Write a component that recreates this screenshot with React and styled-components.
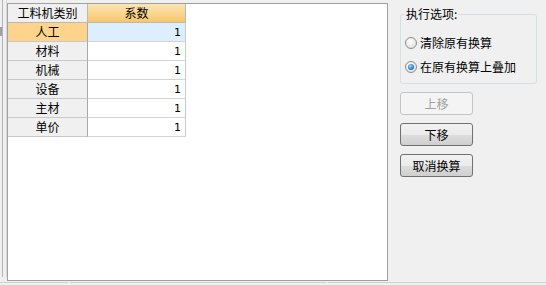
import React from "react";
import styled, { createGlobalStyle } from "styled-components";

const Global = createGlobalStyle`
	html, body {
		margin: 0;
		padding: 0;
		background: #f0f0f0;
	}
	body {
		font-family: "Noto Sans CJK SC", "Liberation Sans", sans-serif;
		font-size: 12px;
		color: #000;
	}
`;

const Page = styled.div`
	width: 546px;
	height: 285px;
	display: grid;
	grid-template-rows: 282px 3px;
	overflow: hidden;
	background: #f0f0f0;
`;

const Top = styled.div`
	display: flex;
`;

const Splitter = styled.div`
	width: 7px;
	height: 277px;
	box-sizing: border-box;
	border-right: 1px solid #d8d8d8;
	position: relative;
	&::before {
		content: "";
		position: absolute;
		left: 2px;
		top: 0;
		bottom: 0;
		width: 1px;
		background: #b4b4b4;
	}
	&::after {
		content: "";
		position: absolute;
		left: 0;
		top: 27px;
		width: 2px;
		height: 9px;
		background: #a0a0a0;
	}
`;

const GridPanel = styled.div`
	margin-top: 3px;
	width: 381px;
	height: 278px;
	box-sizing: border-box;
	border: 1px solid #a0a0a0;
	background: #fff;
`;

const Table = styled.div`
	display: grid;
	grid-template-columns: 80px 98px;
	grid-auto-rows: 19px;
	width: 178px;
`;

const HeadCell = styled.div`
	display: flex;
	align-items: center;
	justify-content: center;
	box-sizing: border-box;
	border-right: 1px solid #b8b8b8;
	border-bottom: 1px solid #b8b8b8;
	background: ${(p) =>
		p.$accent ? "linear-gradient(180deg, #fce6b4 0%, #f6c66c 100%)" : "#f0f0f0"};
	line-height: 1;
`;

const RowHead = styled.div`
	display: flex;
	align-items: center;
	justify-content: center;
	box-sizing: border-box;
	border-right: 1px solid #a8a8a8;
	border-bottom: 1px solid #c8c8c8;
	background: ${(p) => (p.$active ? "#fed48c" : "#f0f0f0")};
	line-height: 1;
`;

const Cell = styled.div`
	display: flex;
	align-items: center;
	justify-content: flex-end;
	padding-right: 4px;
	box-sizing: border-box;
	border-right: 1px solid #c8c8c8;
	border-bottom: 1px solid #d4d4d4;
	background: ${(p) => (p.$active ? "#ddeeff" : "#fff")};
	font-family: "DejaVu Sans", sans-serif;
	font-size: 11px;
	line-height: 1;
`;

const Side = styled.div`
	flex: 1;
	padding: 7px 0 0 12px;
	display: flex;
	flex-direction: column;
	align-items: flex-start;
`;

const Group = styled.fieldset`
	margin: 0;
	width: 137px;
	height: 77px;
	box-sizing: border-box;
	border: 1px solid #d5dfe5;
	border-radius: 3px;
	padding: 13px 0 0 4px;
	display: flex;
	flex-direction: column;
	gap: 6px;
`;

const Legend = styled.legend`
	padding: 0 1px;
	margin-left: 0;
	line-height: 14px;
`;

const RadioRow = styled.label`
	display: flex;
	align-items: center;
	gap: 3px;
	height: 18px;
	line-height: 1;
`;

const Dot = styled.span`
	width: 12px;
	height: 12px;
	box-sizing: border-box;
	border-radius: 50%;
	border: 1px solid #8c8c8c;
	background: radial-gradient(circle at 40% 35%, #ffffff 0%, #e4e4e4 70%, #d0d0d0 100%);
	display: flex;
	align-items: center;
	justify-content: center;
	&::after {
		content: "";
		display: ${(p) => (p.$checked ? "block" : "none")};
		width: 6px;
		height: 6px;
		border-radius: 50%;
		background: radial-gradient(circle at 40% 35%, #9adcff 0%, #2374c8 65%, #0e4f9a 100%);
	}
`;

const Buttons = styled.div`
	margin-top: 8px;
	display: flex;
	flex-direction: column;
	gap: 8px;
`;

const Button = styled.button`
	width: 73px;
	height: 23px;
	box-sizing: border-box;
	border-radius: 3px;
	border: 1px solid ${(p) => (p.disabled ? "#c4c4c4" : "#707070")};
	background: ${(p) =>
		p.disabled
			? "#f4f4f4"
			: "linear-gradient(180deg, #f2f2f2 0%, #ebebeb 50%, #dddddd 51%, #cfcfcf 100%)"};
	color: ${(p) => (p.disabled ? "#a0a0a0" : "#000")};
	font-family: inherit;
	font-size: 12px;
	line-height: 1;
	padding: 0;
`;

const Status = styled.div`
	display: grid;
	grid-template-columns: 68px 256px 1fr;
	gap: 2px;
	align-items: end;
`;

const StatusPart = styled.div`
	height: 2px;
	border-top: 1px solid #d0d0d0;
`;

const rows = ["人工", "材料", "机械", "设备", "主材", "单价"];

export default function App() {
	return (
		<>
			<Global />
			<Page>
				<Top>
					<Splitter />
					<GridPanel>
						<Table>
							<HeadCell>工料机类别</HeadCell>
							<HeadCell $accent>系数</HeadCell>
							{rows.map((name, i) => (
								<React.Fragment key={name}>
									<RowHead $active={i === 0}>{name}</RowHead>
									<Cell $active={i === 0}>1</Cell>
								</React.Fragment>
							))}
						</Table>
					</GridPanel>
					<Side>
						<Group>
							<Legend>执行选项:</Legend>
							<RadioRow>
								<Dot />
								清除原有换算
							</RadioRow>
							<RadioRow>
								<Dot $checked />
								在原有换算上叠加
							</RadioRow>
						</Group>
						<Buttons>
							<Button disabled>上移</Button>
							<Button>下移</Button>
							<Button>取消换算</Button>
						</Buttons>
					</Side>
				</Top>
				<Status>
					<StatusPart />
					<StatusPart />
					<StatusPart />
				</Status>
			</Page>
		</>
	);
}
